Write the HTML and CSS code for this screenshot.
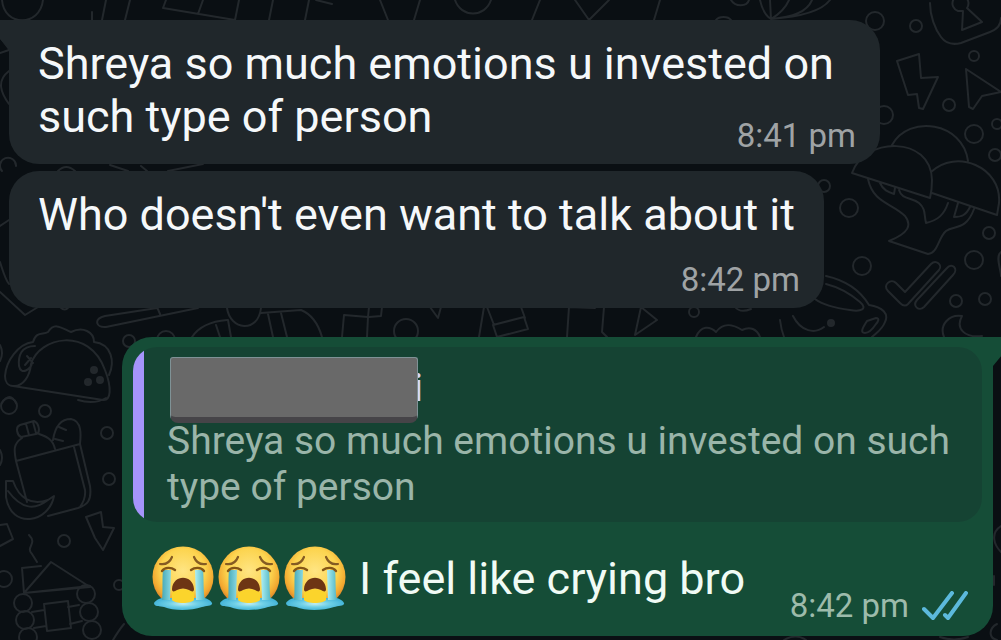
FILE: index.html
```html
<!DOCTYPE html>
<html lang="en">
<head>
<meta charset="utf-8">
<meta name="viewport" content="width=device-width, initial-scale=1">
<title>Chat</title>
<link rel="stylesheet" href="styles.css">
</head>
<body>
<svg class="wallpaper" viewBox="0 0 1001 640" preserveAspectRatio="xMinYMin slice" aria-hidden="true">
  <!-- top strip -->
  <path d="M2 0C4 27 40 27 43 0M92 12v9M106 0l-4 20M130 0l-5 20M166 0l-3 8 72 12 4-20M203 0l-5 14M273 0l-4 20M309 0l-4 20M316 0l16 4M380 0l8 20M420 0l-6 20M455 0c6 18 30 18 36 0M540 0l-8 20M575 0l14 20 20-20M660 0l-6 20"/>
  <path d="M731 0c4 7 16 7 18 0M716 20c3-4 12-4 15 0M760 0c2 9 6 16 11 19 10-6 15-12 18-19M770 0l1 19M771 19c22-2 36-7 41-19M771 19c28-2 50-7 59-19"/>
  <path d="M930 3c0 13 5 26 11 34 5 7 12 8 20 6l29-11c8-3 11-8 11-14"/>
  <path d="M958 11a8 8 0 1 1 9-3l15 14-20 8 1-19z"/>
  <!-- right side -->
  <circle cx="875" cy="21" r="9"/><circle cx="916" cy="26" r="6"/><circle cx="974" cy="56" r="5"/><circle cx="949" cy="105" r="6"/><circle cx="884" cy="115" r="9"/><circle cx="974" cy="134" r="9"/><circle cx="997" cy="124" r="5"/><circle cx="995" cy="155" r="6"/><circle cx="824" cy="186" r="6"/><circle cx="849" cy="208" r="9"/><circle cx="989" cy="233" r="6"/><circle cx="974" cy="260" r="9"/><circle cx="862" cy="266" r="9"/><circle cx="956" cy="301" r="6"/><circle cx="985" cy="299" r="6"/>
  <path d="M897 61l22-7 2 24 17-1-15 32-4-1-2-14-9 1zM966 69l35 23-19 4-9 13-4-2zM892 145c17-31 71-23 76 16M852 173c12-36 79-38 80 7 0 8-1 14-2 18zM931 172c25-24 71-5 68 31l-2 12-65-22M868 179c5 24 24 24 37 37 7 9 4 17-16 25l39 13c10-1 10-16 18-23 8-6 20 0 28-22M880 183c3 7 8 9 14 11l1-6M899 190c3 10 12 7 20 13 7 6 5 12 7 20 12-3 18-8 22-20M958 203l-4 14c8 0 12-2 16-10"/>
  <path d="M896 283l9 9 26-28c5-5 12 1 8 6l-31 34c-3 3-6 1-8-1l-12-12c-6-6 3-13 8-8zM947 268l-30 32c-5 6 2 12 7 7l29-32c6-6-1-13-6-7z"/>
  <path d="M826 276c18 4 34 14 43 29 14 2 20 9 16 17-3 8-9 11-13 15M826 284c16 4 27 12 34 18 8 7 1 10-10 8-15-2-27-5-35-11M867 321l9-3c4 0 2 4 0 6-4 6-7 9-11 9-6 0-1-7 2-12zM793 316c8 16 22 18 31 11M780 320q1 9 4 17M944 337c-5-12 5-23 18-21-7 13 3 22 20 20M1001 252c-6 4 0 18 0 24"/>
  <circle class="dot" cx="831" cy="323" r="3"/>
  <!-- strip between incoming and outgoing -->
  <path d="M342 337l2-22 24 2 1-10M368 317l-1 20M369 317l12-1 1-9M368 307l13-1M430 307l8 11 3-11M479 337l5-30M487 307l7 18M493 325l31-8 4 12-31 8zM521 307l4 11M567 337l2-30 26 1M604 307l-2 25 5 5M641 307l16 13-22 15zM696 337c5-12 14-11 20-5 8-11 18-7 26-2 8-4 15-1 18 7M735 307c4 5 11 4 16 2"/>
  <circle cx="406" cy="331" r="12"/><circle cx="694" cy="312" r="5"/>
  <path d="M157 308l-52 8c-12 3-9 12 1 11l92-19M157 307l3 7M227 308c3 22 31 26 34 0M192 337q10-15 35-17M216 325l4 12M228 320l3 17M261 313l40-3c10 4 17 13 21 27M268 314l5 23M281 313l6 24M60 307q5 5 9 0M0 292l25 23 13-8"/>
  <circle cx="129" cy="341" r="6"/><circle cx="166" cy="340" r="9"/>
  <!-- left side -->
  <path d="M0 37l9 12M0 53l9-3M9 71c-13 10-8 22 0 33M16 166a8 8 0 1 0-14 5M58 171q8-8 17 0M110 165l18 6M141 166l6 5M168 171l35-7M0 262c3 9 5 17 9 22M0 226l9-6"/>
  <path d="M33 342c3-11 10-7 15-10 7-11 15-3 23 0 12-6 23 0 23 10 18 2 21 20 15 33M33 342C18 344 6 361 5 376c0 6 3 10 8 10 10 1 17-10 18-22 8-27 58-38 74 6 7 18 6 31-2 30L13 386M35 346c-14 0-17 10-16 20 2 10 12 3 13-3M27 356l6 7M25 365l6-7"/>
  <circle class="dot" cx="94" cy="370" r="3"/><circle class="dot" cx="88" cy="382" r="3"/><circle class="dot" cx="100" cy="380" r="3"/>
  <path d="M0 345q4 8 0 16M2 403q8-12 14 0M78 400q16 5 28-2"/>
  <circle cx="9" cy="406" r="8"/><circle cx="45" cy="411" r="6"/><circle cx="107" cy="433" r="6"/><circle cx="109" cy="479" r="6"/><circle cx="64" cy="541" r="6"/><circle cx="4" cy="579" r="8"/><circle cx="119" cy="585" r="5"/>
  <path d="M20 425l14-4c5 2 7 12 2 13l-15 3c-4-2-6-10-1-12zM26 424l3 11M33 422l3 11M22 438c-9 6-8 12-6 23l11 41M16 461l64-17 10 42c2 15-3 19-12 22l-30 8M39 434c9 3 14 6 16 15M53 440c2-13 8-21 18-21 11 2 10 16 9 25M59 427l7 3M55 439l8 2M74 447l11 43q1 9-5 17M6 481h7c6 17 18 25 35 19l6-4c-5 27-43 34-48 1zM8 491c14 19 27 19 40 9"/>
  <path d="M86 517l15-5 2 15 11 1-11 22-8-12zM0 525l7-1 6 15-13 7M29 535c9 9-4 12 3 19l5 8M24 593l-2-25 19-2M24 593l27-31 39 25zM24 593l66-7M32 612l12-2M34 628l12-2M68 607l11-2M70 624l12-3M44 604l24-3 3 27-24 3zM113 640q6-10 11-16M0 450q4 8 0 15"/>
  <circle cx="23" cy="603" r="9"/><circle cx="25" cy="620" r="9"/><circle cx="28" cy="637" r="9"/><circle cx="86" cy="594" r="9"/><circle cx="89" cy="612" r="9"/><circle cx="92" cy="630" r="9"/>
  <path d="M1001 526c-11 7-7 19 0 26M994 576v9M784 640q12-7 22 0M997 624c-8 4-9 14 0 16M940 637q14 5 28 0"/>
</svg>

<svg class="defs" width="0" height="0" aria-hidden="true">
  <defs>
    <radialGradient id="face" cx=".5" cy=".4" r=".58">
      <stop offset="0" stop-color="#ffe583"/><stop offset=".62" stop-color="#fcd44f"/><stop offset=".88" stop-color="#f2a72f"/><stop offset="1" stop-color="#d9822a"/>
    </radialGradient>
    <linearGradient id="tear" x1="0" x2="1" y1="0" y2="0">
      <stop offset="0" stop-color="#48a9b8"/><stop offset=".3" stop-color="#a4ecf4"/><stop offset=".55" stop-color="#5dbfd8"/><stop offset=".75" stop-color="#b3f3f7"/><stop offset="1" stop-color="#51b5c3"/>
    </linearGradient>
    <radialGradient id="pool"><stop offset="0" stop-color="#c3edf2"/><stop offset=".5" stop-color="#6fd0e6"/><stop offset="1" stop-color="#46b5d9"/></radialGradient>
    <symbol id="sob" viewBox="0 0 62 64">
      <circle cx="31" cy="31" r="30.5" fill="url(#face)"/>
      <path d="M2 57c3-5 10-6 15-5h29c6-1 12 1 14 5 1 3-6 3-10 4-11 4-29 4-38 0-4-1-10 0-10-4z" fill="url(#pool)"/>
      <path d="M20 47c2-5 20-5 22 0v7c-3 4-19 4-22 0z" fill="#fbd42c"/>
      <path d="M20 43c1-15 21-15 22 0 0 4-3 2-5 1-4-2-8-2-12 0-2 1-5 3-5-1z" fill="#6d3514"/>
      <path d="M11 24h8l-1 30H10c1-8 0-21 1-30zM43 24h8c1 9 0 22 2 30h-9z" fill="url(#tear)"/>
      <path d="M10 25c3-4 9-4 13-1M39 24c4-3 10-3 13 1" fill="none" stroke="#855617" stroke-width="2.4" stroke-linecap="round"/>
      <path d="M8 18c6 1 10-2 12-7M42 11c2 5 6 8 12 7" fill="none" stroke="#855b23" stroke-width="2.2" stroke-linecap="round"/>
    </symbol>
  </defs>
</svg>

<main class="chat">
  <article class="bubble incoming first">
    <svg class="tail" viewBox="0 0 10 23" aria-hidden="true"><path d="M0 0h10v32L7 27 0 19z"/></svg>
    <p class="text">Shreya so much emotions u invested on such type of person</p>
    <div class="meta tuck"><time>8:41 pm</time></div>
  </article>
  <article class="bubble incoming">
    <p class="text">Who doesn't even want to talk about it</p>
    <div class="meta below"><time>8:42 pm</time></div>
  </article>
  <article class="bubble outgoing">
    <svg class="tail" viewBox="0 0 10 32" aria-hidden="true"><path d="M0 0h10v18L1 29v3H0z"/></svg>
    <blockquote class="quote">
      <div class="sender"><span class="redaction"></span><span class="name">i</span></div>
      <p class="quoted">Shreya so much emotions u invested on such type of person</p>
    </blockquote>
    <p class="text reply">
      <span class="emojis" role="img" aria-label="Three loudly crying faces">
        <svg class="emoji"><use href="#sob"/></svg>
        <svg class="emoji"><use href="#sob"/></svg>
        <svg class="emoji"><use href="#sob"/></svg>
      </span>
      <span>I feel like crying bro</span>
    </p>
    <div class="meta sent"><time>8:42 pm</time>
      <svg class="ticks" viewBox="0 0 46 30" role="img" aria-label="Read"><path d="M2 18l9 9L30 2M23 24l3 3L44 2"/></svg>
    </div>
  </article>
</main>
</body>
</html>
```
FILE: styles.css
```css
* { box-sizing: border-box; }

body {
  margin: 0;
  min-height: 100vh;
  position: relative;
  overflow: hidden;
  background: #0a0f13;
  font-family: Roboto, "Liberation Sans", sans-serif;
}

p, blockquote { margin: 0; }

.wallpaper {
  position: absolute;
  inset: 0;
  width: 100%;
  height: 100%;
  fill: none;
  stroke: #23282c;
  stroke-width: 2;
  stroke-linejoin: round;
  stroke-linecap: round;
}

.wallpaper .dot { fill: #23282c; }

.defs { position: absolute; }

.chat {
  position: relative;
  display: flex;
  flex-direction: column;
  align-items: flex-start;
  gap: 7px;
  padding: 20px 8px 4px 9px;
}

.bubble {
  position: relative;
  display: flex;
  flex-direction: column;
  width: fit-content;
  max-width: 871px;
  border-radius: 30px;
}

.incoming {
  padding: 17px 29px 8px;
  background: #20272b;
  color: #f5f8fa;
}

.first { border-top-left-radius: 0; }

.tail {
  position: absolute;
  top: 0;
  width: 10px;
  overflow: visible;
}

.incoming .tail {
  left: -9px;
  height: 23px;
  fill: #20272b;
}

.outgoing .tail {
  right: -9px;
  height: 32px;
  fill: #154d37;
}

.text {
  font-size: 45px;
  line-height: 53px;
}

.meta {
  display: flex;
  align-items: center;
  align-self: flex-end;
  gap: 13px;
  margin-right: -5px;
  font-size: 33px;
  line-height: 40px;
  color: #9fa3a5;
}

.tuck { margin-top: -27px; }

.below { margin-top: 19px; }

.outgoing {
  align-self: flex-end;
  margin-top: 22px;
  padding: 10px 11px;
  border-top-right-radius: 0;
  background: #154d37;
  color: #f0fbf5;
}

.quote {
  padding: 10px 24px 12px 34px;
  border-radius: 24px;
  background: linear-gradient(to right, #a594fb 11px, #154333 11px);
}

.sender {
  display: flex;
  align-items: center;
  height: 61px;
  padding-left: 3px;
}

.redaction {
  position: relative;
  z-index: 1;
  flex: none;
  align-self: flex-start;
  width: 248px;
  height: 66px;
  border: 1px solid #7f9296;
  border-bottom: 6px solid #464448;
  border-radius: 3px 3px 8px 8px;
  background: #696969;
}

.name {
  margin-left: -5px;
  font-size: 38px;
  font-weight: 500;
  line-height: 46px;
  color: #d5d8fb;
}

.quoted {
  font-size: 39px;
  line-height: 46px;
  color: #9ab5a9;
}

.reply {
  display: flex;
  align-items: center;
  gap: 13px;
  padding: 24px 18px 0 19px;
}

.emojis {
  display: flex;
  gap: 4px;
}

.emoji {
  width: 62px;
  height: 64px;
}

.sent {
  margin-top: -24px;
  margin-right: 14px;
  color: #9dbbab;
}

.ticks {
  width: 46px;
  height: 30px;
  fill: none;
  stroke: #5cb9dc;
  stroke-width: 4;
  stroke-linecap: round;
  stroke-linejoin: round;
}
```
